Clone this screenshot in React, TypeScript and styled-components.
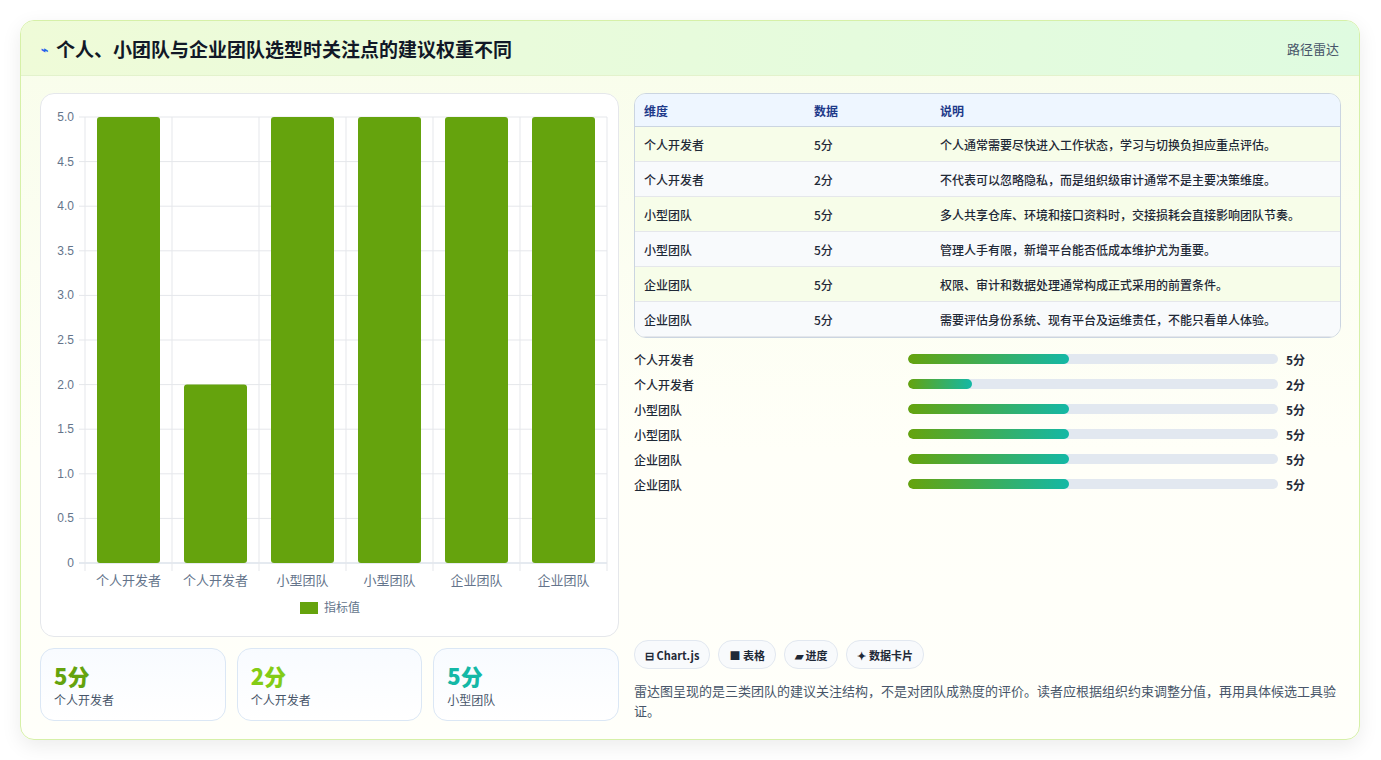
import React from "react";
import styled, { createGlobalStyle } from "styled-components";

const Global = createGlobalStyle`
  body { margin: 0; background: #fff; font-family: "Noto Sans CJK SC", "Noto Sans", sans-serif; }
`;
const Page = styled.div`padding: 20px 21px 20px 20px; width: 1381px; box-sizing: border-box;`;
const Card = styled.div`
  border: 1px solid #d6f0a8; border-radius: 14px; overflow: hidden; height: 720px; box-sizing: border-box;
  background: linear-gradient(180deg, #f8fdea 0%, #fffff8 60%, #fffffa 100%);
  box-shadow: 0 6px 20px rgba(0,0,0,0.08); display: flex; flex-direction: column;
`;
const Header = styled.div`
  height: 55px; flex: none; display: flex; align-items: center; justify-content: space-between; padding: 0 20px;
  background: linear-gradient(90deg, #effbd8, #dffbe0); border-bottom: 1px solid #e3f2cc; box-sizing: border-box;
`;
const Title = styled.h1`margin: 0; font-size: 19px; font-weight: 700; color: #111827; display: flex; align-items: center; gap: 8px;`;
const Tag = styled.span`font-size: 13px; color: #475569;`;
const Body = styled.div`display: grid; grid-template-columns: 579px 707px; gap: 15px; padding: 17px 19px 18px 19px; flex: 1;`;
const Left = styled.div`display: flex; flex-direction: column; gap: 11px;`;
const Panel = styled.div`background: #fff; border: 1px solid #e5e7eb; border-radius: 14px; height: 544px; box-sizing: border-box; overflow: hidden;`;
const Stats = styled.div`display: grid; grid-template-columns: repeat(3, 1fr); gap: 11px;`;
const Stat = styled.div`height: 73px; border: 1px solid #dbe7f5; border-radius: 14px; background: linear-gradient(180deg,#f8fbff,#fff); padding: 12px 13px; box-sizing: border-box;`;
const StatNum = styled.div<{ c: string }>`font-size: 22px; font-weight: 800; color: ${p => p.c}; line-height: 28px;`;
const StatLbl = styled.div`font-size: 12px; color: #475569; margin-top: 2px;`;
const Right = styled.div`display: flex; flex-direction: column;`;
const Table = styled.table`width: 100%; border-collapse: separate; border-spacing: 0; border: 1px solid #cbd5e1; border-radius: 12px; overflow: hidden; font-size: 12px;`;
const Th = styled.th`text-align: left; height: 32px; padding: 0 9px; background: #eef6ff; color: #1e3a8a; font-weight: 600; border-bottom: 1px solid #cbd5e1;`;
const Td = styled.td<{ alt: boolean }>`height: 34px; padding: 0 9px; color: #1f2937; font-weight: 500; background: ${p => (p.alt ? "#f8fafc" : "#f7fde9")}; border-bottom: 1px solid #e5e7eb;`;
const Bars = styled.div`display: flex; flex-direction: column; gap: 7px; margin-top: 12px;`;
const BarRow = styled.div`display: grid; grid-template-columns: 266px 370px auto; align-items: center; gap: 8px; font-size: 12px; height: 18px; color: #1f2937; font-weight: 500;`;
const Track = styled.div`height: 10px; border-radius: 5px; background: #e2e8f0; overflow: hidden;`;
const Fill = styled.div`height: 100%; border-radius: 5px; background: linear-gradient(90deg, #65a30d, #14b8a6);`;
const Val = styled.span`font-weight: 700; color: #1f2937;`;
const Spacer = styled.div`flex: 1;`;
const Badges = styled.div`display: flex; gap: 8px;`;
const Badge = styled.span`height: 27px; padding: 0 10px; border: 1px solid #e2e8f0; border-radius: 14px; background: #f8fafc; font-size: 11px; font-weight: 600; color: #1f2937; display: flex; align-items: center;`;
const Note = styled.p`margin: 12px 0 0; font-size: 13px; line-height: 20px; color: #475569;`;

const rows = [
  ["个人开发者", "5分", "个人通常需要尽快进入工作状态，学习与切换负担应重点评估。", 5],
  ["个人开发者", "2分", "不代表可以忽略隐私，而是组织级审计通常不是主要决策维度。", 2],
  ["小型团队", "5分", "多人共享仓库、环境和接口资料时，交接损耗会直接影响团队节奏。", 5],
  ["小型团队", "5分", "管理人手有限，新增平台能否低成本维护尤为重要。", 5],
  ["企业团队", "5分", "权限、审计和数据处理通常构成正式采用的前置条件。", 5],
  ["企业团队", "5分", "需要评估身份系统、现有平台及运维责任，不能只看单人体验。", 5],
] as const;

function Chart() {
  const L = 44, R = 566, T = 23, B = 469;
  const ticks = [0, 0.5, 1, 1.5, 2, 2.5, 3, 3.5, 4, 4.5, 5];
  const cw = (R - L) / 6;
  const y = (v: number) => B - (v / 5) * (B - T);
  return (
    <svg width="579" height="544" style={{ display: "block" }}>
      {ticks.map(t => (
        <g key={t}>
          <line x1={L - 6} x2={R} y1={y(t)} y2={y(t)} stroke={t === 0 ? "#cbd5e1" : "#e5e7eb"} />
          <text x={L - 11} y={y(t) + 4} textAnchor="end" fontSize="12" fill="#64748b" fontFamily="Liberation Sans, sans-serif">{t === 0 ? "0" : t.toFixed(1)}</text>
        </g>
      ))}
      {Array.from({ length: 7 }).map((_, i) => (
        <line key={i} x1={L + i * cw} x2={L + i * cw} y1={T} y2={B + 8} stroke="#e5e7eb" />
      ))}
      {rows.map((r, i) => (
        <g key={i}>
          <rect x={L + i * cw + 12} y={y(r[3] as number)} width={cw - 24} height={B - y(r[3] as number)} rx="3" fill="#65a30d" />
          <text x={L + i * cw + cw / 2} y={B + 22} textAnchor="middle" fontSize="13" fill="#64748b">{r[0]}</text>
        </g>
      ))}
      <rect x="259" y="508" width="18" height="12" fill="#65a30d" />
      <text x="283" y="518" fontSize="12" fill="#64748b">指标值</text>
    </svg>
  );
}

export default function App() {
  return (
    <Page>
      <Global />
      <Card>
        <Header>
          <Title><span style={{ fontSize: 12, color: "#2563eb" }}>⌁</span>个人、小团队与企业团队选型时关注点的建议权重不同</Title>
          <Tag>路径雷达</Tag>
        </Header>
        <Body>
          <Left>
            <Panel><Chart /></Panel>
            <Stats>
              <Stat><StatNum c="#65a30d">5分</StatNum><StatLbl>个人开发者</StatLbl></Stat>
              <Stat><StatNum c="#84cc16">2分</StatNum><StatLbl>个人开发者</StatLbl></Stat>
              <Stat><StatNum c="#14b8a6">5分</StatNum><StatLbl>小型团队</StatLbl></Stat>
            </Stats>
          </Left>
          <Right>
            <Table>
              <thead><tr><Th style={{ width: 152 }}>维度</Th><Th style={{ width: 108 }}>数据</Th><Th>说明</Th></tr></thead>
              <tbody>
                {rows.map((r, i) => (
                  <tr key={i}><Td alt={i % 2 === 1}>{r[0]}</Td><Td alt={i % 2 === 1}>{r[1]}</Td><Td alt={i % 2 === 1}>{r[2]}</Td></tr>
                ))}
              </tbody>
            </Table>
            <Bars>
              {rows.map((r, i) => (
                <BarRow key={i}>
                  <span>{r[0]}</span>
                  <Track><Fill style={{ width: `${((r[3] as number) / 11.5) * 100}%` }} /></Track>
                  <Val>{r[1]}</Val>
                </BarRow>
              ))}
            </Bars>
            <Spacer />
            <Badges>
              <Badge>⊟ Chart.js</Badge><Badge>■ 表格</Badge><Badge>▰ 进度</Badge><Badge>✦ 数据卡片</Badge>
            </Badges>
            <Note>雷达图呈现的是三类团队的建议关注结构，不是对团队成熟度的评价。读者应根据组织约束调整分值，再用具体候选工具验证。</Note>
          </Right>
        </Body>
      </Card>
    </Page>
  );
}
